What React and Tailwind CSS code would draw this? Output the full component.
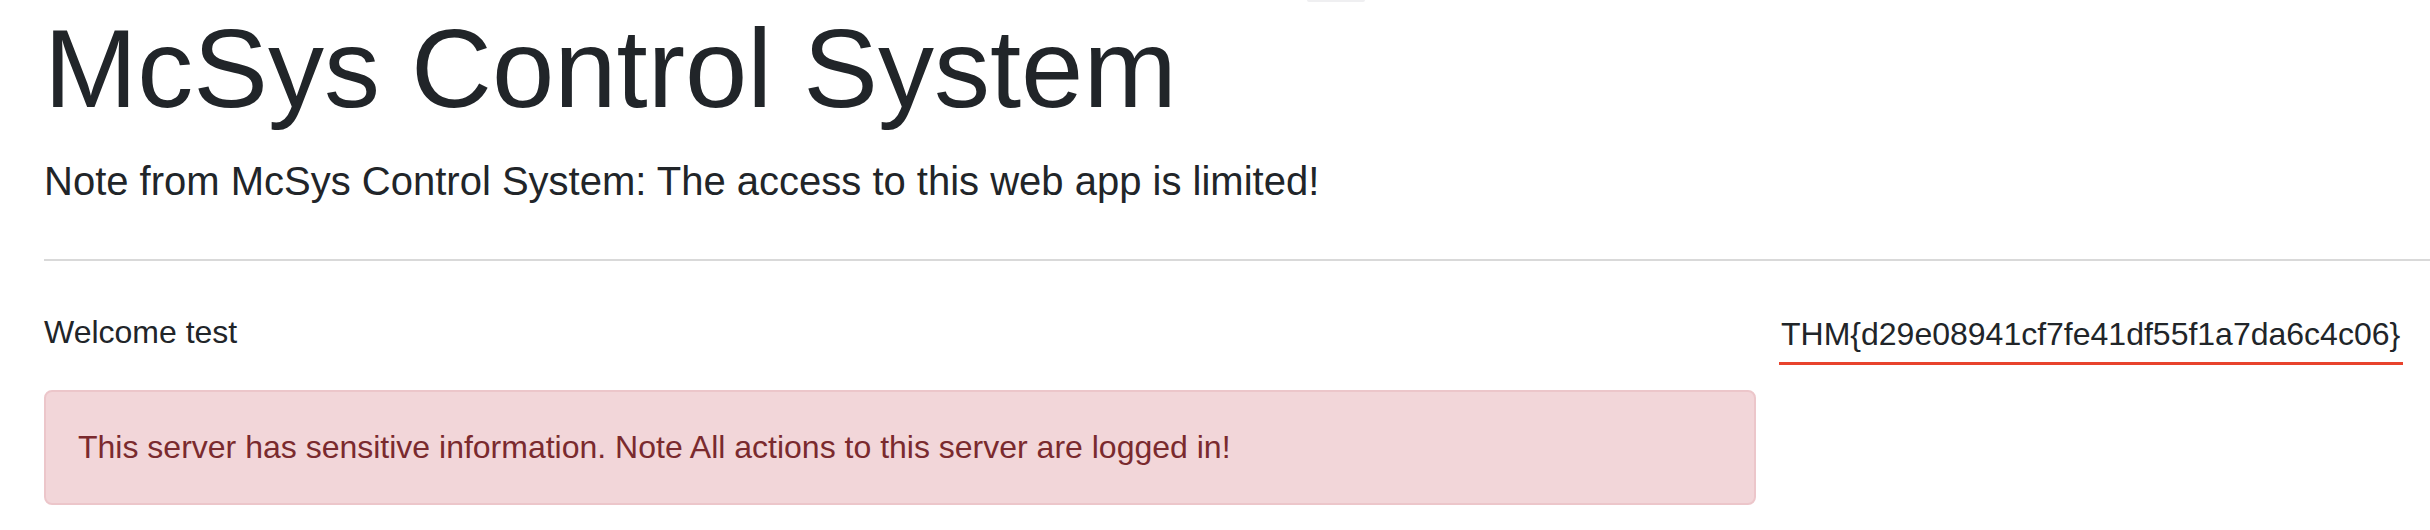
function App() {
  return (
    <div
      className="relative w-[2430px] h-[530px] overflow-hidden bg-white text-[#212529]"
      style={{ fontFamily: '"Liberation Sans", Arial, sans-serif' }}
    >
      
      <div className="absolute left-[1307px] top-0 w-[58px] h-[2px] rounded-b-full bg-[#efeff1]" />

      <div className="pl-[44px] pt-[2px]">
        <h1 className="text-[112px] leading-[134px] font-normal mb-[15px]">McSys Control System</h1>
        <p className="text-[40px] leading-[60px]">
          Note from McSys Control System: The access to this web app is limited!
        </p>
        <hr className="mt-[48px] border-0 border-t-2 border-[#d9d9d9]" />

        <div className="flex mt-[47px] gap-[23px]">
          <div className="w-[1712px] flex flex-col">
            <p className="text-[32px] leading-[48px]">Welcome test</p>
            <div className="mt-[34px] rounded-[8px] border-2 border-[#ecc6ca] bg-[#f2d6d9] pl-[32px] pr-[30px] pt-[31px] pb-[32px] text-[32px] leading-[48px] text-[#7a2a2e]">
              This server has sensitive information. Note All actions to this server are logged in!
            </div>
          </div>

          <div className="pt-[2px]">
            <span className="inline-block text-[32px] leading-[48px] pl-[2px] pr-[3px] pb-[4px] border-b-[3px] border-[#e8432d]">
              THM{'{'}d29e08941cf7fe41df55f1a7da6c4c06{'}'}
            </span>
          </div>
        </div>
      </div>
    </div>
  )
}

export default App
